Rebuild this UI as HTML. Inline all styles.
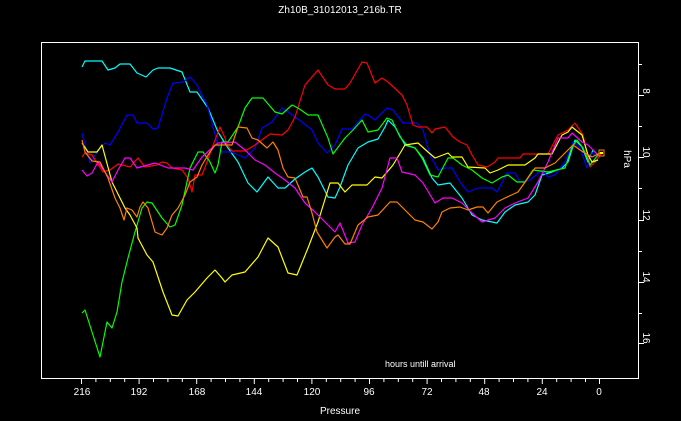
<!DOCTYPE html>
<html><head><style>
html,body{margin:0;padding:0;background:#000;width:681px;height:421px;overflow:hidden}
svg{display:block}
text{font-family:"Liberation Sans",sans-serif;fill:#fff}
</style></head><body>
<svg width="681" height="421" viewBox="0 0 681 421" xmlns="http://www.w3.org/2000/svg">
<rect width="681" height="421" fill="#000"/>
<text x="340" y="13" font-size="10" text-anchor="middle">Zh10B_31012013_216b.TR</text>
<rect x="41.5" y="42.5" width="597" height="336" fill="none" stroke="#fff" stroke-width="1"/>
<g stroke="#fff" stroke-width="1" fill="none">
<path d="M81.5 379v5M95.9 379v3M110.3 379v3M124.7 379v3M139.1 379v5M153.5 379v3M167.9 379v3M182.3 379v3M196.7 379v5M211.1 379v3M225.5 379v3M239.9 379v3M254.3 379v5M268.7 379v3M283.1 379v3M297.5 379v3M311.9 379v5M326.3 379v3M340.7 379v3M355.1 379v3M369.5 379v5M383.9 379v3M398.3 379v3M412.7 379v3M427.1 379v5M441.5 379v3M455.9 379v3M470.3 379v3M484.7 379v5M499.1 379v3M513.5 379v3M527.9 379v3M542.3 379v5M556.7 379v3M571.1 379v3M585.5 379v3M599.5 379v5"/>
<path d="M639 64.5h3M639 95.5h5M639 126.5h3M639 157.5h5M639 188.5h3M639 220.5h5M639 251.5h3M639 282.5h5M639 313.5h3M639 343.5h5"/>
</g>
<g font-size="10" text-anchor="middle">
<text x="82" y="395">216</text><text x="139" y="395">192</text><text x="197" y="395">168</text><text x="254" y="395">144</text><text x="312" y="395">120</text><text x="369" y="395">96</text><text x="427" y="395">72</text><text x="484" y="395">48</text><text x="542" y="395">24</text><text x="599" y="395">0</text>
</g>
<text x="340" y="414" font-size="10" text-anchor="middle">Pressure</text>
<text x="385" y="367" font-size="9">hours untill arrival</text>
<g font-size="10" text-anchor="middle">
<text transform="translate(643,91) rotate(90)">8</text>
<text transform="translate(643,152) rotate(90)">10</text>
<text transform="translate(643,215) rotate(90)">12</text>
<text transform="translate(643,277) rotate(90)">14</text>
<text transform="translate(643,338) rotate(90)">16</text>
<text transform="translate(624,159) rotate(90)">hPa</text>
</g>
<g fill="none" stroke-width="1.2" stroke-linejoin="round">
<polyline stroke="#00ffff" points="82,67 85,61 102,61 108,70 115,68 120,64 130,64 137,73 146,77 153,70 158,68 170,68 182,72 190,92 197,92 208,108 218,132 228,148 238,162 248,183 257,192 268,177 278,188 285,188 295,179 305,172 312,168 318,177 328,197 335,198 340,187 348,165 358,148 368,142 378,139 385,127 388,120 395,127 405,145 415,148 423,158 432,178 438,185 450,183 462,198 472,215 482,220 497,223 505,212 515,205 528,202 535,195 542,175 552,172 562,168 568,162 575,140 582,147 588,162 593,150 598,155"/>
<polyline stroke="#0000ff" points="82,133 90,163 97,152 105,143 110,145 118,132 127,115 133,115 137,123 147,123 153,129 158,128 167,98 173,83 183,82 190,77 197,85 207,105 213,127 218,145 222,152 232,152 245,158 255,148 262,128 272,122 282,108 288,112 302,122 312,130 318,143 327,153 335,145 342,129 352,129 365,114 368,115 375,120 387,108 393,110 403,123 417,123 423,130 430,155 438,170 445,168 452,168 460,182 468,192 478,188 492,188 497,192 507,173 515,173 520,182 530,180 542,170 548,177 555,175 565,162 573,142 580,148 587,168 592,153 598,157"/>
<polyline stroke="#ff0000" points="82,157 85,153 92,155 103,172 110,170 118,164 130,167 138,158 145,167 157,165 162,162 167,163 172,168 182,170 188,178 192,192 195,175 202,175 207,162 212,148 220,127 225,138 227,145 232,151 245,151 255,145 270,134 282,135 288,130 295,117 305,85 318,70 328,85 335,89 345,89 350,83 362,62 367,63 375,83 382,78 388,82 402,95 407,105 413,125 418,127 427,127 432,133 435,129 445,127 453,137 460,142 467,145 472,155 478,165 487,167 495,162 498,158 520,158 523,154 548,154 558,135 568,130 575,123 583,135 590,167 595,162 602,153"/>
<polyline stroke="#00ff00" points="82,313 85,310 92,332 100,357 107,322 112,328 117,312 122,282 128,258 135,232 142,208 147,202 152,203 162,218 170,227 175,225 182,205 190,168 198,152 203,152 210,162 215,173 218,165 222,142 228,142 238,127 245,108 252,98 263,98 275,112 282,114 292,105 298,108 308,115 318,115 328,138 333,154 345,138 353,130 362,120 368,132 378,130 387,118 392,120 400,137 407,145 415,148 422,158 430,175 438,177 448,158 453,158 462,165 472,170 482,178 492,183 502,177 508,175 517,182 525,182 533,170 548,172 565,168 572,147 577,140 583,148 590,165 598,155"/>
<polyline stroke="#ffff00" points="82,143 88,152 97,152 102,145 112,182 125,208 130,215 137,228 138,238 147,255 153,262 163,292 172,315 178,316 187,300 195,292 207,278 215,270 222,278 225,282 232,275 245,272 258,257 268,238 278,247 288,273 297,275 308,248 318,222 330,183 338,183 345,192 352,185 367,185 375,177 382,178 393,165 405,145 418,143 428,152 435,158 448,153 452,157 462,157 468,167 485,168 490,173 498,170 508,165 525,165 535,158 538,154 552,154 562,135 568,132 572,127 582,135 588,155 592,162 598,160"/>
<polyline stroke="#ff00ff" points="82,170 87,176 92,173 98,162 107,175 112,182 118,170 125,158 130,158 137,168 155,163 168,168 185,168 193,170 202,157 212,148 218,143 235,142 245,150 255,160 265,165 275,173 285,180 295,188 305,203 315,212 328,225 335,232 340,223 348,243 355,242 362,225 372,208 382,188 390,158 397,158 402,172 415,175 423,183 435,203 443,198 452,198 462,203 472,213 482,222 495,218 505,208 515,203 528,198 538,182 548,162 558,138 568,138 572,133 582,142 588,145 593,150 598,155"/>
<polyline stroke="#ff8000" points="82,140 85,152 92,161 100,162 108,178 115,198 120,208 124,220 127,208 132,210 137,217 140,207 143,202 148,208 155,232 162,235 167,228 172,215 178,208 185,195 190,182 197,177 202,165 208,155 215,145 232,145 238,127 247,128 252,138 258,140 267,148 273,142 278,150 283,168 288,177 295,178 303,197 307,197 312,213 317,232 327,248 335,237 338,235 345,244 350,244 358,225 368,217 378,215 390,202 397,202 405,210 415,220 423,222 432,229 438,222 442,212 450,208 460,207 468,210 477,207 483,207 488,213 497,202 505,198 518,192 528,178 535,168 545,168 555,163 563,155 573,145 583,152 592,157 602,152"/>
</g>
<rect x="599" y="150" width="5" height="6" fill="none" stroke="#ff8000" stroke-width="1"/>
<rect x="600" y="152" width="3" height="2" fill="#ffff00"/>
</svg>
</body></html>
